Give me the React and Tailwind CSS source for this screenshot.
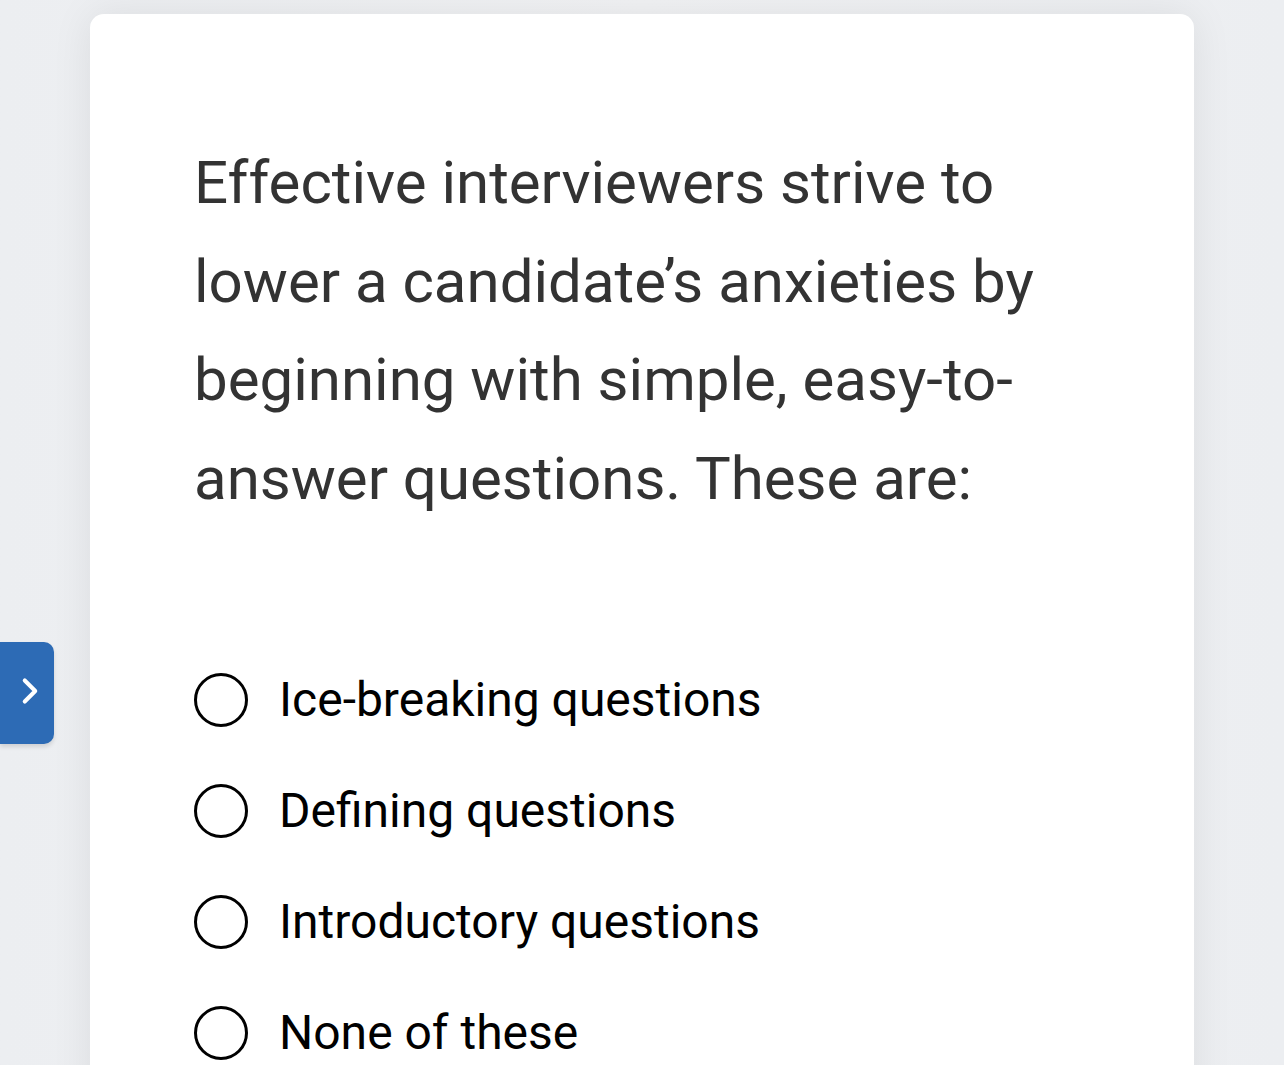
import { ChevronRight } from "lucide-react";

const options = [
  "Ice-breaking questions",
  "Defining questions",
  "Introductory questions",
  "None of these",
];

export default function App() {
  return (
    <div className="relative h-[1065px] w-full overflow-hidden bg-gradient-to-r from-[#eceef1] via-[#f1f2f4] to-[#eceef1] font-['Roboto',sans-serif]">
      <div className="mx-[90px] mt-[14px] h-[1200px] rounded-[14px] bg-white pl-[104px] pr-[100px] pt-[120px] shadow-[0_0_40px_rgba(0,0,0,0.08)]">
        <p className="text-[60px] leading-[98.5px] text-[#333333]">
          Effective interviewers strive to lower a candidate’s anxieties by beginning with simple, easy-to-answer questions. These are:
        </p>
        <div className="mt-[116px] flex flex-col">
          {options.map((o) => (
            <label key={o} className="flex h-[111px] items-center gap-[31px]">
              <span className="h-[54px] w-[54px] shrink-0 rounded-full border-[3px] border-black" />
              <span className="text-[48px] text-black">{o}</span>
            </label>
          ))}
        </div>
      </div>
      <button className="absolute left-0 top-[642px] flex h-[102px] w-[54px] items-center justify-center rounded-r-[10px] bg-[#2d6bb5] pb-[4px] pl-[6px] text-white shadow-[0_3px_4px_rgba(0,0,0,0.12)]">
        <ChevronRight size={42} strokeWidth={2.3} />
      </button>
    </div>
  );
}
